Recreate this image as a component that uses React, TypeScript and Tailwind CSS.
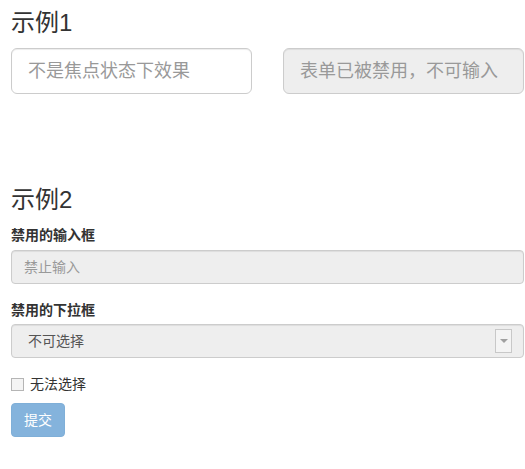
import React from 'react';

const font = { fontFamily: '"Liberation Sans", "Noto Sans CJK SC", sans-serif' };

function Label({ children, className = '' }: { children: React.ReactNode; className?: string }) {
  return <div className={`text-[14px] leading-[20px] font-bold text-[#333] ${className}`}>{children}</div>;
}

export default function App() {
  return (
    <div className="bg-white w-[525px] h-[469px] pl-[11px] pt-[8px] text-[#333]" style={font}>
      <h3 className="text-[24px] leading-[30px] font-normal text-[#333]">示例1</h3>

      <div className="mt-[10px] flex gap-[31px] w-[513px]">
        <input
          className="w-[241px] h-[46px] rounded-[6px] border border-[#ccc] px-[16px] text-[18px] text-[#555] placeholder:text-[#999] shadow-[inset_0_1px_1px_rgba(0,0,0,0.075)] outline-none"
          placeholder="不是焦点状态下效果"
        />
        <input
          disabled
          className="w-[241px] h-[46px] rounded-[6px] border border-[#ccc] bg-[#eee] px-[16px] text-[18px] placeholder:text-[#999] shadow-[inset_0_1px_1px_rgba(0,0,0,0.075)] outline-none"
          placeholder="表单已被禁用，不可输入"
        />
      </div>

      <h3 className="mt-[91px] text-[24px] leading-[30px] font-normal text-[#333]">示例2</h3>

      <Label className="mt-[10px]">禁用的输入框</Label>
      <input
        disabled
        className="mt-[5px] block w-[513px] h-[34px] rounded-[4px] border border-[#ccc] bg-[#eee] px-[12px] text-[14px] placeholder:text-[#999] shadow-[inset_0_1px_1px_rgba(0,0,0,0.075)] outline-none"
        placeholder="禁止输入"
      />

      <Label className="mt-[16px]">禁用的下拉框</Label>
      <div className="mt-[4px] w-[513px] h-[34px] rounded-[4px] border border-[#ccc] bg-[#eee] flex items-center pl-[16px] pr-[11px] shadow-[inset_0_1px_1px_rgba(0,0,0,0.075)]">
        <span className="flex-1 text-[14px] text-[#555]">不可选择</span>
        <div className="w-[17px] h-[24px] border border-[#c8c8c8] bg-[#f4f4f4] flex items-center justify-center">
          <div className="w-0 h-0 border-l-[4px] border-r-[4px] border-t-[4px] border-l-transparent border-r-transparent border-t-[#a0a0a0]" />
        </div>
      </div>

      <label className="mt-[16px] flex items-center gap-[6px] text-[14px] leading-[20px] text-[#333]">
        <span className="w-[13px] h-[13px] border border-[#b5b5b5] bg-[#f4f4f4]" />
        无法选择
      </label>

      <button
        disabled
        className="mt-[9px] block h-[34px] px-[12px] rounded-[4px] border border-[#7fafd8] bg-[#84b3dc] text-white text-[14px]"
      >
        提交
      </button>
    </div>
  );
}
